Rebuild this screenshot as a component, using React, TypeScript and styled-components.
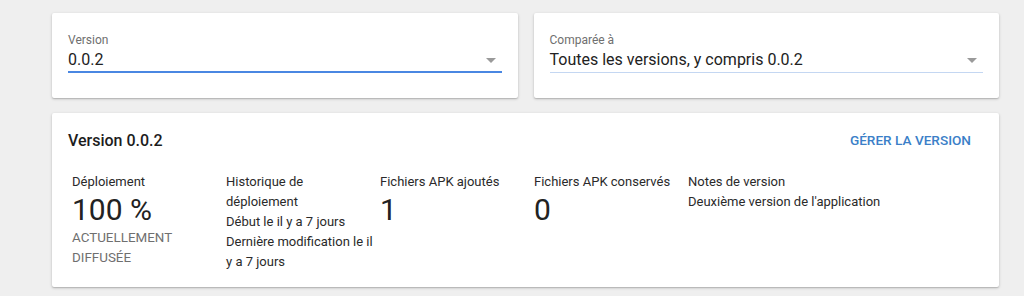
import React from "react";
import styled, { createGlobalStyle } from "styled-components";

const Global = createGlobalStyle`
  html, body { margin: 0; padding: 0; background: #efefef; }
  body { font-family: Roboto, "Noto Sans", Arial, sans-serif; color: #212121; }
  * { box-sizing: border-box; }
`;

const Page = styled.div`
  padding: 13px 25px 9px 52px;
  display: flex;
  flex-direction: column;
  gap: 15px;
`;

const TopRow = styled.div`
  display: grid;
  grid-template-columns: 1fr 1fr;
  gap: 16px;
`;

const Card = styled.div`
  background: #fff;
  border-radius: 2px;
  box-shadow: 0 1px 3px rgba(0, 0, 0, 0.22), 0 1px 1px rgba(0, 0, 0, 0.1);
`;

const SelectCard = styled(Card)`
  height: 85px;
  padding: 19px 16px 0 16px;
`;

const FieldLabel = styled.div`
  font-size: 12px;
  line-height: 16px;
  color: #6f6f6f;
`;

const SelectBox = styled.div<{ $focused?: boolean }>`
  display: flex;
  align-items: flex-end;
  justify-content: space-between;
  height: 25px;
  border-bottom: ${(p) => (p.$focused ? "2px solid #4a87e2" : "1px solid #c4d7f2")};
  padding-bottom: ${(p) => (p.$focused ? "1px" : "2px")};
`;

const SelectValue = styled.span`
  font-size: 16px;
  line-height: 20px;
  color: #222;
`;

const Arrow = styled.span`
  width: 0;
  height: 0;
  border-left: 5px solid transparent;
  border-right: 5px solid transparent;
  border-top: 5px solid #9a9a9a;
  margin-right: 6px;
  margin-bottom: 7px;
`;

const InfoCard = styled(Card)`
  padding: 16px 16px 15px 16px;
`;

const Header = styled.div`
  display: flex;
  align-items: center;
  justify-content: space-between;
  height: 24px;
`;

const Title = styled.div`
  font-size: 16px;
  font-weight: 500;
  line-height: 24px;
  color: #1d1d1d;
`;

const ActionButton = styled.button`
  border: none;
  background: none;
  font-family: inherit;
  font-size: 13.6px;
  font-weight: 500;
  color: #3b7fc8;
  text-transform: uppercase;
  padding: 0;
  margin-right: 12px;
  margin-top: -3px;
  cursor: pointer;
`;

const Columns = styled.div`
  display: flex;
  margin-top: 19px;
`;

const Column = styled.div<{ $wide?: boolean }>`
  width: ${(p) => (p.$wide ? "280px" : "154px")};
  padding: 0 2px 0 4px;
  font-size: 13px;
  line-height: 20px;
  color: #2a2a2a;
`;

const Big = styled.div`
  font-size: 30px;
  line-height: 36px;
  color: #222;
`;

const Caption = styled.div`
  font-size: 13.4px;
  line-height: 20px;
  color: #6f6f6f;
  text-transform: uppercase;
`;

export default function App() {
  return (
    <>
      <Global />
      <Page>
        <TopRow>
          <SelectCard>
            <FieldLabel>Version</FieldLabel>
            <SelectBox $focused>
              <SelectValue>0.0.2</SelectValue>
              <Arrow />
            </SelectBox>
          </SelectCard>
          <SelectCard>
            <FieldLabel>Comparée à</FieldLabel>
            <SelectBox>
              <SelectValue>Toutes les versions, y compris 0.0.2</SelectValue>
              <Arrow />
            </SelectBox>
          </SelectCard>
        </TopRow>
        <InfoCard>
          <Header>
            <Title>Version 0.0.2</Title>
            <ActionButton>Gérer la version</ActionButton>
          </Header>
          <Columns>
            <Column>
              <div>Déploiement</div>
              <Big>100 %</Big>
              <Caption>Actuellement diffusée</Caption>
            </Column>
            <Column>
              <div>Historique de déploiement</div>
              <div>Début le il y a 7 jours</div>
              <div>Dernière modification le il y a 7 jours</div>
            </Column>
            <Column>
              <div>Fichiers APK ajoutés</div>
              <Big>1</Big>
            </Column>
            <Column>
              <div>Fichiers APK conservés</div>
              <Big>0</Big>
            </Column>
            <Column $wide>
              <div>Notes de version</div>
              <div>Deuxième version de l'application</div>
            </Column>
          </Columns>
        </InfoCard>
      </Page>
    </>
  );
}
